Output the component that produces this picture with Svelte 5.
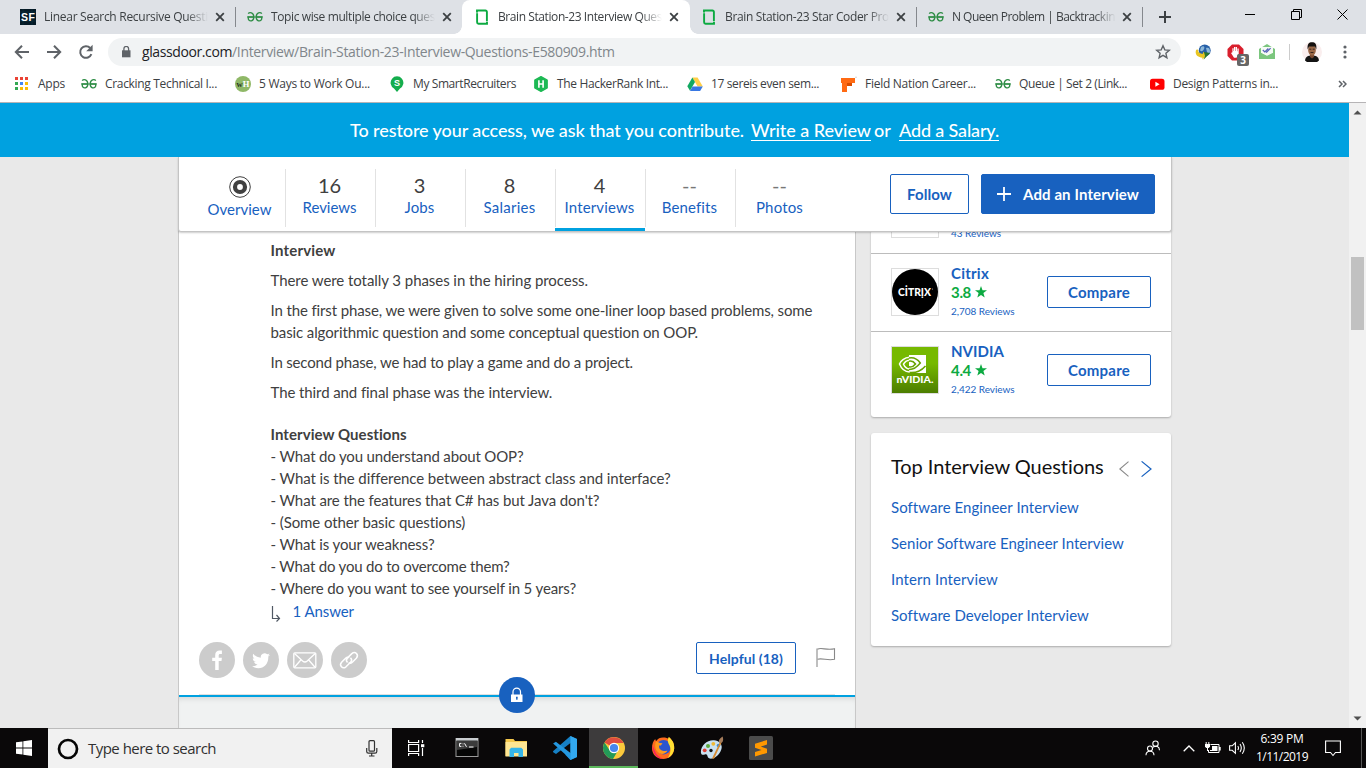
<script>
  // Tracks a label so that it spans the given width in pixels.
  function fit(node, width) {
    const natural = node.getBoundingClientRect().width;
    const count = [...node.textContent].length;
    if (width && count) {
      node.style.letterSpacing = (width - natural) / count + 'px';
    }
  }

  const tabs = [
    { icon: 'sf', title: 'Linear Search Recursive Questi', w: 164 },
    { icon: 'gg', title: 'Topic wise multiple choice ques', w: 164 },
    { icon: 'gd', title: 'Brain Station-23 Interview Ques', w: 164, active: true },
    { icon: 'gd', title: 'Brain Station-23 Star Coder Pro', w: 164 },
    { icon: 'gg', title: 'N Queen Problem | Backtrackin', w: 163 }
  ];

  const bookmarks = [
    { icon: 'gg', title: 'Cracking Technical I...', w: 112, span: 154 },
    { icon: 'wh', title: '5 Ways to Work Ou...', w: 111, span: 154 },
    { icon: 'sr', title: 'My SmartRecruiters', w: 103, span: 144 },
    { icon: 'hr', title: 'The HackerRank Int...', w: 111, span: 154 },
    { icon: 'drive', title: '17 sereis even sem...', w: 108, span: 154 },
    { icon: 'fn', title: 'Field Nation Career...', w: 111, span: 154 },
    { icon: 'gg', title: 'Queue | Set 2 (Link...', w: 108, span: 154 },
    { icon: 'yt', title: 'Design Patterns in...', w: 105, span: 154 }
  ];

  const nav = [
    { count: '', label: 'Overview', w: 64 },
    { count: '16', label: 'Reviews', w: 54 },
    { count: '3', label: 'Jobs', w: 30 },
    { count: '8', label: 'Salaries', w: 52 },
    { count: '4', label: 'Interviews', w: 70, active: true },
    { count: '--', label: 'Benefits', w: 55 },
    { count: '--', label: 'Photos', w: 47 }
  ];

  const questions = [
    ['- What do you understand about OOP?', 253],
    ['- What is the difference between abstract class and interface?', 399.5],
    ["- What are the features that C# has but Java don't?", 329],
    ['- (Some other basic questions)', 195],
    ['- What is your weakness?', 164],
    ['- What do you do to overcome them?', 239],
    ['- Where do you want to see yourself in 5 years?', 305.5]
  ];

  const companies = [
    { name: 'Citrix', nw: 38, rating: '3.8', reviews: '2,708 Reviews' },
    { name: 'NVIDIA', nw: 53, rating: '4.4', reviews: '2,422 Reviews' }
  ];

  const topics = [
    ['Software Engineer Interview', 187.5],
    ['Senior Software Engineer Interview', 232.5],
    ['Intern Interview', 107],
    ['Software Developer Interview', 197.5]
  ];
  const apps = ['cmd', 'files', 'code', 'chrome', 'firefox', 'paint', 'sublime'];
  const appsDots = ['#ea4335', '#ea4335', '#ea4335', '#34a853', '#4285f4', '#fbbc05', '#34a853', '#fbbc05', '#fbbc05'];
</script>

{#snippet favicon(name)}
  <svg class="fav" viewBox="0 0 16 16" width="16" height="16">
    {#if name === 'sf'}
      <rect width="16" height="16" fill="#061a26" />
      <path d="M0 3h16M0 12h16M3 0v16M12 0v16" stroke="#0c3040" stroke-width=".7" />
      <text x="8" y="11.6" text-anchor="middle" font-size="10.5" font-weight="700" fill="#fff" font-family="Liberation Sans, sans-serif" textLength="14">SF</text>
    {:else if name === 'gg'}
      <g fill="none" stroke="#2f8d46" stroke-width="1.35">
        <path d="M1.2 4.6C2.500 3 6.800 3.300 6.800 7.900S2.400 13 1.300 9.900V8h6.200" />
        <path d="M14.800 4.600C13.500 3 9.200 3.300 9.200 7.900s4.400 5.100 5.500 2V8H8.500" />
        <path d="M0 8h16" stroke-width="1" />
      </g>
    {:else if name === 'gd'}
      <g fill="none" stroke="#0caa41" stroke-width="1.900">
        <path d="M3 4V1.500h8.500a1.400 1.400 0 0 1 1.400 1.400v9.600" />
        <path d="M13 12v2.700H4.500a1.400 1.400 0 0 1-1.400-1.400V3.700" />
      </g>
      <path d="M1.500 3.400h2.800v.8H1.500zM11.600 12h2.800v.8h-2.800z" fill="#fff" opacity=".8" />
    {:else if name === 'wh'}
      <circle cx="8" cy="8" r="8" fill="#8fb867" />
      <text x="8" y="11" text-anchor="middle" font-size="8.500" font-weight="700" font-family="Liberation Serif, serif"><tspan fill="#263322">w</tspan><tspan fill="#fff">H</tspan></text>
    {:else if name === 'sr'}
      <path d="M8 16 5 12.400a6.400 6.400 0 1 1 6 0z" fill="#14ad4d" />
      <text x="8" y="9.800" text-anchor="middle" font-size="9" font-weight="700" fill="#fff" font-family="Liberation Sans, sans-serif">S</text>
    {:else if name === 'hr'}
      <path d="M8 .6l6.200 3.400v8L8 15.400 1.800 12V4z" fill="#1db954" stroke="#1db954" stroke-width="1.300" stroke-linejoin="round" />
      <path d="M5.900 4.200v7.600M10.100 4.200v7.600M5.900 8h4.200" stroke="#fff" stroke-width="1.600" />
    {:else if name === 'drive'}
      <path d="M5.400 1.500h5.200l5.200 9h-5.200z" fill="#ffcf48" />
      <path d="M5.400 1.500l2.600 4.600-5 8.600-2.700-4.400z" fill="#11a861" />
      <path d="M5.500 10.500h10.300L13.100 15H3z" fill="#3777e3" />
    {:else if name === 'fn'}
      <path d="M0 2h14v5h-3v3H6v6H1V7H0z" fill="#ff6a13" />
      <path d="M6 7h5v3H6z" fill="#d84c00" />
      <path d="M14.500.8h1v1h-1z" fill="#aaa" />
    {:else if name === 'yt'}
      <rect x="1" y="2.800" width="14.500" height="11" rx="2.600" fill="#f00" />
      <path d="M6.400 5.800v5l4.200-2.500z" fill="#fff" />
    {/if}
  </svg>
{/snippet}

{#snippet taskIcon(name)}
  <svg viewBox="0 0 24 24" width="24" height="24">
    {#if name === 'cmd'}
      <rect x="1" y="2.500" width="22" height="18" fill="#050505" stroke="#9a9a9a" />
      <path d="M1 2h22v2.600H1z" fill="#c9cdd0" />
      <path d="M2 5h20v6L2 14z" fill="#3b3b3b" />
      <path d="M6.400 7.400H4.600v3h1.800M8 7.500v.8M8 9.800v.8M9.500 7.300l2 3.500M14 11h4.500" stroke="#fff" fill="none" />
    {:else if name === 'files'}
      <path d="M1.500 3h8l1.500 2h12v15h-21.500z" fill="#f5c84c" />
      <path d="M1.500 6h21.500v14.500H1.500z" fill="#ffe692" />
      <path d="M5.500 21v-7.500l1.700-1.700h10.100l1.700 1.700V21h-4.500v-4h-4.500v4z" fill="#35b5e9" />
    {:else if name === 'code'}
      <path d="M17.400 0 24 3v18l-6.600 3L12 18.500 17.500 17V7L3 18.100.2 16.300 0 15.200z" fill="#1680c5" />
      <path d="M.1 7.500 2.900 5.800 17.500 17v7L13 19z" fill="#2497df" />
      <path d="M17.400 0 24 3v18l-6.600 3z" fill="#32a8ef" />
    {:else if name === 'chrome'}
      <circle cx="12" cy="12" r="11" fill="#fbc93c" />
      <path d="M12 12 2.500 6.500A11 11 0 0 1 21.600 7H12z" fill="#df4d3f" />
      <path d="M2.500 6.500A11 11 0 0 0 11 23l5-8.500-4-2.500-4.500 2z" fill="#239a58" />
      <circle cx="12" cy="12" r="5.200" fill="#fff" />
      <circle cx="12" cy="12" r="4.100" fill="#4687ed" />
    {:else if name === 'firefox'}
      <path d="M12 1.500c3 0 4.500.6 6.200 1.600l-.4-2C22 4.600 23.400 8 23.200 12.500 22.800 19 18 23 12.200 23 6 23 1 18.400 1 12.200 1 8 2.200 5 4.200 3L5 5.200C7 2.600 9 1.500 12 1.500z" fill="#ff6a1d" />
      <path d="M1.400 9C1 17 6 23 12.200 23c-4.200-2-7-4-8.300-8z" fill="#f7215e" />
      <circle cx="12.600" cy="11.200" r="7.200" fill="#2b55d0" />
      <path d="M5.200 5.300 9 7l2.500.2-1.600 2.400H8.100c-.4 2.300.5 4 2.700 5 2.400.9 3.800-.2 5.700.1-1.600 3-6.100 4.600-9.300 1.800C3.800 13.700 3.500 8.500 5.200 5.300z" fill="#ff9a1d" />
      <path d="M17.800 1.100C22 4.600 23.400 8 23.200 12.500 22.800 17 20 20.600 16.800 22c3-4.500 3.700-10 .9-14C16.500 5.500 16.600 3 17.800 1.100z" fill="#ffdf33" />
    {:else if name === 'paint'}
      <path d="M1 17C0 10 7 3.500 14 4.200c7 .6 9.400 6 6.600 11C17 22.500 9.500 24.500 7.800 21c-.8-2-.6-3-3-2.500-1.800.5-3.500.5-3.800-1.500z" fill="#c9e1f1" />
      <circle cx="4.700" cy="14.300" r="1.900" fill="#dd3f35" /><circle cx="8" cy="10" r="2" fill="#5caa3c" />
      <circle cx="13.300" cy="7.800" r="1.900" fill="#f1b832" /><circle cx="18.500" cy="9.500" r="1.800" fill="#3c8fd6" />
      <circle cx="11" cy="14.500" r="1.700" fill="#111" />
      <path d="M12 22.500 20 6l1.500.7-7.500 16z" fill="#d88b31" />
      <path d="M19 6c-.6-2.500 1.500-4 3.600-5.500.8 2.400 1 5-1.200 6.600z" fill="#a67d5c" />
    {:else}
      <rect width="24" height="24" rx="1.500" fill="#4b4b4b" />
      <path d="M18 4v4.600l-6.200 2L18 12.700v4.200L6 20.500V16l6.500-2L6 11.800V7.700z" fill="#ff9800" />
    {/if}
  </svg>
{/snippet}

<div class="screen">
  <header class="tabstrip">
    {#each tabs as tab, i}
      <div class="tab" class:active={tab.active} class:divided={i === 1 || i === 4}>
        {@render favicon(tab.icon)}
        <div class="title"><span use:fit={tab.w}>{tab.title}</span></div>
        <svg class="close" width="10" height="10" viewBox="0 0 10 10"><path d="M1.200 1.200l7.600 7.600M8.800 1.200 1.200 8.800" stroke="#3c4043" stroke-width="1.800" /></svg>
      </div>
    {/each}
    <div class="newtab"><svg width="12" height="12" viewBox="0 0 12 12"><path d="M6 0v12M0 6h12" stroke="#3c4043" stroke-width="2" /></svg></div>
    <div class="wincontrols">
      <svg width="11" height="11" viewBox="0 0 11 11"><path d="M0 5.500h10" stroke="#000" /></svg>
      <svg width="11" height="11" viewBox="0 0 11 11"><path d="M.5 2.500h8v8h-8zM2.500 2.500v-2h8v8h-2" fill="none" stroke="#000" /></svg>
      <svg width="11" height="11" viewBox="0 0 11 11"><path d="M.5.5l10 10M10.500.5l-10 10" stroke="#000" /></svg>
    </div>
  </header>

  <div class="toolbar">
    <div class="navicons">
      <svg width="16" height="16" viewBox="0 0 16 16"><path d="M15 8H2M8 1.700 1.800 8 8 14.300" fill="none" stroke="#5f6368" stroke-width="2" /></svg>
      <svg width="16" height="16" viewBox="0 0 16 16"><path d="M1 8h13M8 1.700 14.200 8 8 14.300" fill="none" stroke="#5f6368" stroke-width="2" /></svg>
      <svg width="16" height="16" viewBox="0 0 16 16"><path d="M13.400 10.200A5.800 5.800 0 1 1 12.200 4" fill="none" stroke="#5f6368" stroke-width="2" /><path d="M14.600.8v6.400H8.200z" fill="#5f6368" /></svg>
    </div>
    <div class="omnibox">
      <svg class="padlock" width="10" height="12" viewBox="0 0 10 12"><path d="M0 4.300h8.500v7H0z" fill="#5f6368" /><path d="M1.900 5V2.800a2.350 2.350 0 0 1 4.700 0V5" fill="none" stroke="#5f6368" stroke-width="1.300" /></svg>
      <div class="url"><b use:fit={90}>glassdoor.com</b><span use:fit={382.5}>/Interview/Brain-Station-23-Interview-Questions-E580909.htm</span></div>
      <svg class="star" width="16" height="16" viewBox="0 0 16 16"><path d="M8 1.800l1.800 4.100 4.500.4-3.400 3 1 4.400L8 11.400l-3.900 2.300 1-4.400-3.400-3 4.500-.4z" fill="none" stroke="#5f6368" stroke-width="1.400" /></svg>
    </div>
    <div class="extensions">
      <svg width="16" height="16" viewBox="0 0 16 16">
        <circle cx="9.700" cy="6.400" r="6" fill="#2860a8" /><path d="M6 3c3-2 4 0 3 2S7 8 5 6.500zM11 4c2-1 4 0 4 3s-2 3-3 1z" fill="#8db8d8" />
        <path d="M1.200 5.800C-.5 10 2 13.400 7.500 13.700l-.2 1.800 4.700-4-3.800-3.700-.2 2C5.200 9.800 3 8.700 3 5.500z" fill="#e8c522" /><path d="M9 8l6 1-6.400 6.800L10 12z" fill="#29752b" />
      </svg>
      <div class="blocker">
        <svg width="17" height="17" viewBox="0 0 17 17"><path d="M5 .5h7L16.500 5v7L12 16.500H5L.5 12V5z" fill="#d91f2d" /><path d="M4 9l1.400-.8V4.300h1.200V7h.4V3h1.300v4h.4V3h1.300v4.200h.4V4.400h1.300V10l-2.200 3.700H7z" fill="#fff" /></svg>
        <span class="count">3</span>
      </div>
      <svg width="16" height="16" viewBox="0 0 16 16"><path d="M0 5 8 0l8 5v10H0z" fill="#7bc67e" /><path d="M2 3h12v6l-6 3-6-3z" fill="#f5faf5" /><path d="M3.800 6l2 2 3.500-3.500M7 7.800l.6.400 4-4" fill="none" stroke="#5562b8" stroke-width="1.200" /><path d="M0 8l8 4 8-4v7H0z" fill="#7bc67e" /></svg>
      <i class="bar"></i>
      <svg width="20" height="20" viewBox="0 0 20 20"><circle cx="10" cy="10" r="10" fill="#faeeee" /><path d="M3 18.500c.5-4 3-5 7-5s6.500 1 7 5a10 10 0 0 1-14 0z" fill="#141414" /><path d="M8 12h4v3l-2 1.500-2-1.500z" fill="#7a4930" /><ellipse cx="10" cy="8" rx="3.900" ry="5.500" fill="#9a6847" /><path d="M5.700 7.500C5 2 7 .3 10 .3S15 2 14.300 7.500L13 4.600H7z" fill="#15110f" /><path d="M7.300 7.200h2M10.700 7.200h2M8.500 10.500h3" stroke="#3a241c" /></svg>
      <svg width="4" height="14" viewBox="0 0 4 14"><g fill="#5f6368"><circle cx="2" cy="2" r="1.600" /><circle cx="2" cy="7" r="1.600" /><circle cx="2" cy="12" r="1.600" /></g></svg>
    </div>
  </div>

  <div class="bookmarks">
    <div class="appsitem">
      <svg width="13" height="13" viewBox="0 0 13 13">
        {#each appsDots as c, i}<rect x={(i % 3) * 5} y={Math.floor(i / 3) * 5} width="3" height="3" fill={c} />{/each}
      </svg>
      <span use:fit={27}>Apps</span>
    </div>
    {#each bookmarks as mark}
      <div class="mark" style:width="{mark.span}px">{@render favicon(mark.icon)}<span use:fit={mark.w}>{mark.title}</span></div>
    {/each}
    <svg class="more" width="9" height="8" viewBox="0 0 9 8"><path d="M1 1l3 3-3 3M5 1l3 3-3 3" fill="none" stroke="#5f6368" stroke-width="1.500" /></svg>
  </div>

  <div class="viewport">
    <div class="page">
      <div class="banner">
        <span use:fit={394}>To restore your access, we ask that you contribute.</span>
        <a use:fit={120}>Write a Review</a>
        <span class="or" use:fit={17}>or</span>
        <a class="salary" use:fit={100}>Add a Salary.</a>
      </div>

      <div class="wrap">
        <nav>
          <div class="navtabs">
            {#each nav as item}
              <div class="navitem" class:active={item.active}>
                {#if item.count}
                  <span class="num" class:empty={item.count === '--'}>{item.count}</span>
                {:else}
                  <svg width="22" height="22" viewBox="0 0 22 22"><circle cx="11" cy="11" r="10.300" fill="none" stroke="#404040" /><circle cx="11" cy="11" r="5" fill="none" stroke="#404040" stroke-width="4.200" /></svg>
                {/if}
                <span class="lbl" use:fit={item.w}>{item.label}</span>
              </div>
            {/each}
          </div>
          <div class="actions">
            <button class="follow"><span use:fit={45}>Follow</span></button>
            <button class="add"><svg width="14" height="14" viewBox="0 0 14 14"><path d="M7 0v14M0 7h14" stroke="#fff" stroke-width="1.800" /></svg><span use:fit={116}>Add an Interview</span></button>
          </div>
        </nav>

        <div class="columns">
          <main>
            <div class="review">
              <h3><span use:fit={65}>Interview</span></h3>
              <p><span use:fit={317.5}>There were totally 3 phases in the hiring process.</span></p>
              <p><span use:fit={541.5}>In the first phase, we were given to solve some one-liner loop based problems, some</span><br /><span use:fit={428}>basic algorithmic question and some conceptual question on OOP.</span></p>
              <p><span use:fit={362.5}>In second phase, we had to play a game and do a project.</span></p>
              <p><span use:fit={281.5}>The third and final phase was the interview.</span></p>
              <h3 class="qhead"><span use:fit={136.5}>Interview Questions</span></h3>
              {#each questions as [q, w]}
                <div class="q"><span use:fit={w}>{q}</span></div>
              {/each}
              <div class="answer">
                <svg width="11" height="16" viewBox="0 0 11 16"><path d="M1.500 0v12.500H8M5.500 9l3 3.500-3 3" fill="none" stroke="#505863" stroke-width="1.200" /></svg>
                <a use:fit={61.5}>1 Answer</a>
              </div>
            </div>
            <div class="share">
              <span class="round"><svg width="36" height="36" viewBox="0 0 36 36"><path d="M16.200 28V19h-3v-3.200h3v-2.600c0-3 1.700-4.600 4.500-4.600h2.200v3.300h-1.600c-1.300 0-1.600.6-1.600 1.700v2.200h3.200l-.4 3.200h-2.800v9z" fill="#fff" /></svg></span>
              <span class="round"><svg width="36" height="36" viewBox="0 0 36 36"><path d="M27 12.800c-.7.300-1.300.500-2 .600.700-.5 1.200-1.200 1.500-2-.8.500-1.500.700-2.300.900a3.800 3.800 0 0 0-6.400 3.400c-3-.2-5.700-1.600-7.500-4-.9 1.700-.5 3.800 1.200 5-.6 0-1.200-.2-1.700-.5 0 1.800 1.200 3.300 3 3.700-.5.200-1.100.2-1.700.1.500 1.500 1.800 2.500 3.500 2.600a8 8 0 0 1-5.600 1.700c8.600 5 16.800-.7 16.300-9.700.7-.5 1.300-1.100 1.700-1.800z" fill="#fff" /></svg></span>
              <span class="round"><svg width="36" height="36" viewBox="0 0 36 36"><g fill="none" stroke="#fff" stroke-width="1.300"><rect x="6.800" y="10.800" width="22" height="15" rx="1" /><path d="M7.500 11.500 15.600 19q2.300 2 4.600 0l8-7.500M7.500 25.200l6.500-7.500M28 25.200l-6.500-7.500" /></g></svg></span>
              <span class="round"><svg width="36" height="36" viewBox="0 0 36 36"><g fill="none" stroke="#fff" stroke-width="1.500"><path d="M16.500 20.500c-1.500-1.500-1.300-3.300 0-4.600l4.300-4.300c3.600-3 7.400 1.300 4.500 4.600l-4 4c-1.300 1.200-2.500 1.300-3.700.5" /><path d="M19.500 15.700c1.500 1.500 1.400 3.200.1 4.500l-4.600 4.600c-3.500 2.800-7.200-1.300-4.400-4.500l4-4c1.100-1.100 2.400-1.300 3.600-.6" /></g></svg></span>
              <button class="helpful"><span use:fit={74}>Helpful (18)</span></button>
              <svg class="flag" width="20" height="21" viewBox="0 0 20 21"><path d="M1 20V1.500" stroke="#aaa" stroke-width="1.500" /><path d="M1.500 2.200c4-2.200 9 1.500 17-.4v10.500c-7 1.700-11.500-1.500-17-.1" fill="none" stroke="#888" stroke-width="1.100" /></svg>
            </div>
            <div class="rule"></div>
            <div class="locked"><span class="lock"><svg width="12" height="16" viewBox="0 0 12 16"><path d="M2 8V4.800a3.700 3.700 0 0 1 7.500 0V8" fill="none" stroke="#fff" stroke-width="1.200" /><path d="M0 7.500h11.500V15H0z" fill="#fff" /><path d="M5 9.700h1.700v2H6.400v1.400h-1v-1.400H5z" fill="#1861bf" /></svg></span></div>
          </main>

          <aside>
            <section class="compare">
              <div class="row first"><div class="logo"></div><span class="reviews" use:fit={50}>43 Reviews</span></div>
              {#each companies as c, i}
                <div class="row">
                  <div class="logo">
                    {#if i === 0}
                      <svg width="46" height="46" viewBox="0 0 46 46"><circle cx="23" cy="23" r="23" /><text x="6" y="27.300" font-size="11" font-weight="900" fill="#fff" font-family="Lato, sans-serif" textLength="33" lengthAdjust="spacingAndGlyphs">CİTRỊX</text><circle cx="40.500" cy="20" r=".6" fill="#aaa" /></svg>
                    {:else}
                      <svg width="46" height="46" viewBox="0 0 46 46">
                        <defs><linearGradient id="nv" x1="0" y1="0" x2="0" y2="1"><stop offset=".35" stop-color="#76b900" /><stop offset="1" stop-color="#4c7d00" /></linearGradient></defs>
                        <rect width="46" height="46" fill="url(#nv)" />
                        <path d="M17 8h17v18H17z" fill="#fff" />
                        <g fill="none" stroke="#fff" stroke-width="1.500"><path d="M17.500 10.300C12.500 10.500 8.500 14 7.500 17c2 5 6 7.800 10 8" /><path d="M17.500 13.200c-3 .3-5 2-6 4 1.300 2.800 3.500 4.500 6 4.800" /></g>
                        <g fill="none" stroke="#68a300" stroke-width="1.500"><path d="M17 11c6-1.200 9.500 2.500 11.300 5-2.800 3.500-6 6.700-11.300 6.500" /><path d="M17 14.200c3-.8 5.200 1 6.500 2.800-1.800 2.300-3.500 3.500-6.500 2.800" /><path d="M33.500 19c-3.500 4-8 7.300-16 6.500" /></g>
                        <text x="4.500" y="35.800" font-size="9.500" font-weight="900" fill="#fff" font-family="Lato, sans-serif" textLength="37" lengthAdjust="spacingAndGlyphs">nVIDIA.</text>
                      </svg>
                    {/if}
                  </div>
                  <div class="info">
                    <strong><span use:fit={c.nw}>{c.name}</span></strong>
                    <em><span use:fit={20}>{c.rating}</span><svg width="12" height="12" viewBox="0 0 12 12"><path d="M6 0l1.500 4.200H12L8.400 7l1.300 4.500L6 8.900l-3.700 2.600L3.600 7 0 4.200h4.500z" fill="#0caa41" /></svg></em>
                    <span class="reviews" use:fit={63.5}>{c.reviews}</span>
                  </div>
                  <button><span use:fit={62}>Compare</span></button>
                </div>
              {/each}
            </section>
            <section class="top">
              <div class="tophead">
                <h2><span use:fit={213}>Top Interview Questions</span></h2>
                <svg width="10" height="16" viewBox="0 0 10 16"><path d="M9.500.6.8 8l8.700 7.400" fill="none" stroke="#888" stroke-width="1.100" /></svg>
                <svg width="11" height="16" viewBox="0 0 11 16"><path d="M.6.4 10 8 .6 15.600" fill="none" stroke="#1861bf" stroke-width="1.200" /></svg>
              </div>
              {#each topics as [t, w]}<div class="topic"><a use:fit={w}>{t}</a></div>{/each}
            </section>
          </aside>
        </div>
      </div>
    </div>
    <div class="scrollbar">
      <svg width="9" height="5" viewBox="0 0 9 5"><path d="M.5 4.500h8L4.500.5z" fill="#505050" /></svg>
      <div class="track"><div class="thumb"></div></div>
      <svg width="9" height="5" viewBox="0 0 9 5"><path d="M.5.5h8l-4 4z" fill="#505050" /></svg>
    </div>
  </div>

  <footer>
    <div class="start"><svg width="16" height="16" viewBox="0 0 16 16" fill="#fff"><path d="M0 2.300 6.500 1.400v6.200H0zM7.300 1.300 16 0v7.600H7.300zM0 8.400h6.500v6.200L0 13.700zM7.300 8.400H16V16l-8.700-1.300z" /></svg></div>
    <div class="search">
      <svg width="22" height="22" viewBox="0 0 22 22"><circle cx="11" cy="11" r="9" fill="none" stroke="#050505" stroke-width="2.700" /></svg>
      <span use:fit={128}>Type here to search</span>
      <svg class="mic" width="12" height="17" viewBox="0 0 12 17"><g fill="none" stroke="#333" stroke-width="1.200"><rect x="3" y=".7" width="5.500" height="10.500" rx="1" /><path d="M.7 8v3.500c0 1 .7 1.700 1.700 1.700h6.700c1 0 1.700-.7 1.700-1.700V8M5.700 13.500V16M3 16h5.500" /></g></svg>
    </div>
    <div class="taskview"><svg width="17" height="16" viewBox="0 0 17 16"><path d="M.6 0v2.500h10V0M.6 16v-2.500h10V16M.6 4.500h10v7H.6zM14.500 0v3M14.500 8v8" fill="none" stroke="#fff" stroke-width="1.200" /><path d="M13 4.200h3.300v3H13z" fill="#fff" /></svg></div>
    {#each apps as app}<div class="task" class:current={app === 'chrome'}>{@render taskIcon(app)}</div>{/each}
    <div class="tray">
      <svg class="people" width="16" height="16" viewBox="0 0 16 16"><g fill="none" stroke="#fff" stroke-width="1.100"><circle cx="10.500" cy="3.700" r="2.700" /><circle cx="5" cy="8.500" r="2.500" /><path d="M1 15.200c0-5.200 7.800-5.500 8 0M8 7.200c3-2 6.500-.7 6.500 3" /></g></svg>
      <svg class="up" width="12" height="7" viewBox="0 0 12 7"><path d="M.7 6.300 6 1l5.300 5.300" fill="none" stroke="#fff" stroke-width="1.300" /></svg>
      <svg class="battery" width="16" height="12" viewBox="0 0 16 12"><path d="M5.500 2.500h8.500v8H3.500V8M14.500 5v3.500M15.200 5v3.500" fill="none" stroke="#fff" /><path d="M7 4h5.500v5H5V8h2z" fill="#fff" /><path d="M1.200 0v2M3.800 0v2" stroke="#fff" /><path d="M0 2h5v2.500L3.800 6H1.200L0 4.500z" fill="#fff" /><path d="M2.500 6v3" stroke="#fff" /></svg>
      <svg class="speaker" width="17" height="14" viewBox="0 0 17 14"><path d="M.6 4.800h2.600l3.200-3v10.500L3.200 9.300H.6zM8.800 5q1.400 2 0 4M11 3q2.600 4 0 8M13.300 1.300q4 5.700 0 11.400" fill="none" stroke="#fff" stroke-width="1.100" /></svg>
      <div class="clock"><span use:fit={43}>6:39 PM</span><span use:fit={52}>1/11/2019</span></div>
      <svg class="notice" width="16" height="17" viewBox="0 0 16 17"><path d="M.6 1h14.800v11.500H10.500L8 15.500l-2.500-3H.6z" fill="none" stroke="#fff" stroke-width="1.100" /></svg>
      <i></i>
    </div>
  </footer>
</div>

<style>
  :global(body) { margin: 0; overflow: hidden; }
  * { box-sizing: border-box; }
  svg { display: block; flex: none; }
  .screen { width: 1366px; height: 768px; display: flex; flex-direction: column; overflow: hidden; font-family: "Open Sans", "Noto Sans", sans-serif; font-size: 12px; color: #3c4043; background: #fff; }
  span, a, b { white-space: nowrap; }
  span, b { display: inline-block; }

  .tabstrip { height: 34px; flex: none; background: #dee1e6; display: flex; padding-left: 8px; }
  .tab { position: relative; width: 227px; display: flex; align-items: center; padding-left: 12px; }
  .tab .title { width: 164px; margin-left: 8px; line-height: 18px; -webkit-mask-image: linear-gradient(90deg, #000 142px, transparent 164px); mask-image: linear-gradient(90deg, #000 142px, transparent 164px); }
  .close { margin-left: 7px; }
  .tab:nth-child(5) .close { margin-left: 6px; }
  .tab.divided::before { content: ""; position: absolute; left: 0; top: 7px; width: 1px; height: 20px; background: #85888d; }
  .tab.active { background: #fff; border-radius: 8px 8px 0 0; width: 228px; margin-right: -1px; }
  .tab.active::before, .tab.active::after { content: ""; position: absolute; bottom: 0; width: 8px; height: 8px; background: radial-gradient(circle at 0 0, transparent 7.500px, #fff 8px); }
  .tab.active::before { left: -8px; }
  .tab.active::after { right: -8px; background: radial-gradient(circle at 100% 0, transparent 7.500px, #fff 8px); }
  .newtab { width: 60px; border-left: 1px solid #85888d; margin: 7px 0 0 -1px; height: 20px; padding: 4px 0 0 16px; }
  .wincontrols { margin-left: auto; display: flex; gap: 35px; padding: 9px 18px 0 0; }

  .toolbar { height: 36px; flex: none; display: flex; align-items: center; }
  .navicons { width: 108px; display: flex; gap: 16px; padding-left: 14px; }
  .omnibox { width: 1073px; height: 28px; border-radius: 14px; background: #f1f3f4; display: flex; align-items: center; padding: 0 10px 0 14px; font-size: 14px; color: #80868b; }
  .url { margin-left: 10px; line-height: 20px; }
  .url b { font-weight: 400; color: #202124; }
  .star { margin-left: auto; }
  .extensions { display: flex; align-items: center; padding-left: 14px; }
  .blocker { position: relative; margin: 0 15px 0 16px; }
  .count { position: absolute; left: 10px; top: 10px; width: 12px; height: 12px; border-radius: 2px; background: #666; color: #fff; font-size: 10px; line-height: 12px; font-weight: 700; text-align: center; }
  .bar { width: 1px; height: 16px; background: #ccc; margin: 0 12px 0 14px; }
  .extensions svg:last-child { margin-left: 21px; }

  .bookmarks { height: 33px; flex: none; display: flex; align-items: center; padding: 0 0 5px 15px; border-bottom: 1px solid #b6b4b6; }
  .appsitem { width: 66px; display: flex; align-items: center; gap: 10px; }
  .mark { display: flex; align-items: center; gap: 8px; flex: none; }
  .more { margin-left: 35px; }

  .viewport { flex: 1; min-height: 0; display: flex; overflow: hidden; }
  .page { width: 1349px; background: #e9e9e9; overflow: hidden; font-family: Lato, sans-serif; font-size: 15px; line-height: 22px; color: #404040; }
  .page a { color: #1861bf; }
  .banner { height: 54px; background: #00a1e0; display: flex; align-items: center; padding: 0 0 0 350px; font-size: 18px; font-weight: 500; color: #fff; }
  .banner span, .banner a { line-height: 20px; border-bottom: 1px solid transparent; }
  .page .banner a { color: #fff; border-bottom-color: #fff; margin-left: 7px; }
  .page .banner .salary { margin-left: 8px; }
  .banner .or { margin-left: 3px; }
  .wrap { width: 994px; margin-left: 178px; }
  nav { position: relative; z-index: 2; height: 75px; background: #fff; border: 1px solid #c4c4c4; border-top: 0; border-radius: 0 0 3px 3px; display: flex; padding-left: 15px; box-shadow: 0 1px 2px #0003; }
  .navtabs { display: flex; }
  .navitem { position: relative; width: 90px; display: flex; flex-direction: column; align-items: center; padding: 17px 0 0 1px; }
  .navitem + .navitem::before { content: ""; position: absolute; left: 1px; top: 12px; height: 58px; width: 1px; background: #e2e2e2; }
  .navitem.active::after { content: ""; position: absolute; left: 1px; right: -1px; bottom: 0; height: 3px; background: #00a1e0; }
  .num { font-size: 20px; height: 22px; }
  .num.empty { color: #777; }
  .lbl { color: #1861bf; }
  .navitem svg { margin: 2px 0 0; }
  .actions { margin-left: auto; display: flex; gap: 12px; padding: 17px 16px 0 0; }
  button { font: 700 15px/22px Lato, sans-serif; color: #1861bf; background: #fff; border: 1px solid #1861bf; border-radius: 2px; padding: 0; display: flex; align-items: center; justify-content: center; }
  .follow { width: 79px; height: 40px; }
  .add { width: 174px; height: 40px; background: #1861bf; color: #fff; gap: 12px; }

  .columns { display: flex; align-items: flex-start; gap: 15px; margin-top: -2px; }
  main { width: 678px; height: 500px; background: #fff; border: solid #c8c8c8; border-width: 0 1px; display: flex; flex-direction: column; }
  .review { height: 412px; padding: 9px 0 0 91.500px; }
  h3, p { margin: 0 0 8px; font-size: 15px; line-height: 22px; }
  .review span { vertical-align: top; }
  .qhead { margin: 20px 0 0; }
  .q { height: 22px; }
  .answer { display: flex; padding-top: 1px; gap: 11px; }
  .answer svg { margin-top: 6px; }
  .share { display: flex; gap: 8px; padding: 0 20px; height: 52px; }
  .round { width: 36px; height: 36px; border-radius: 50%; background: #ccc; }
  .helpful { width: 100px; height: 32px; margin-left: auto; font-size: 14px; padding-top: 1px; }
  .flag { margin: 5px -1px 0 12px; }
  .rule { height: 1px; margin: 0 20px; background: #e0e0e0; }
  .locked { height: 35px; border-top: 2px solid #00a1e0; background: #f0f2f2; display: flex; justify-content: center; box-shadow: inset 0 5px 6px -4px #0002; }
  .lock { width: 36px; height: 36px; border-radius: 50%; background: #1861bf; margin-top: -20px; flex: none; display: flex; align-items: center; justify-content: center; }

  aside { width: 300px; }
  section { background: #fff; border-radius: 3px; box-shadow: 0 1px 2px #0004; }
  .compare { height: 187px; }
  .row { height: 78px; display: flex; padding: 14px 20px 0; border-top: 1px solid #bcbcbc; }
  .row.first { height: 23px; border: 0; align-items: flex-end; padding-top: 0; }
  .logo { width: 48px; height: 48px; border: 1px solid #ddd; background: #fff; flex: none; }
  .first .logo { margin-bottom: 15px; }
  .first .reviews { margin: 0 0 13px 12px; align-self: flex-end; }
  .info { width: 96px; margin: -6px 0 0 12px; display: flex; flex-direction: column; flex: none; }
  .info strong { font-size: 15px; line-height: 22px; color: #1861bf; height: 20px; }
  .info em { font-style: normal; font-weight: 700; color: #0caa41; display: flex; align-items: center; gap: 4px; height: 19px; }
  .reviews { color: #1861bf; font-size: 10px; line-height: 14px; align-self: flex-start; }
  .info .reviews { margin-top: 3px; }
  .row button { width: 104px; height: 32px; margin-top: 8px; flex: none; }
  .top { height: 213px; margin-top: 16px; padding: 16px 0 0 20px; }
  .tophead { display: flex; align-items: center; height: 39px; }
  .tophead svg { margin-left: 12px; }
  .tophead h2 + svg { margin-left: 15px; }
  h2 { margin: 0 0 5px; font-weight: 400; font-size: 20px; line-height: 24px; color: #111; }
  .topic { height: 36px; padding-top: 8px; }
  .topic a, .answer a { display: inline-block; }

  .scrollbar { width: 17px; background: #f1f1f1; display: flex; flex-direction: column; align-items: center; padding: 7px 0; }
  .track { flex: 1; width: 13px; padding-top: 142px; }
  .thumb { height: 73px; background: #c1c1c1; }

  footer { height: 40px; flex: none; background: #0a0809; display: flex; color: #fff; }
  .start { width: 48px; display: flex; align-items: center; justify-content: center; }
  .search { width: 344px; background: #f1f1f1; border-top: 1px solid #bbb; display: flex; align-items: center; padding: 0 14px 0 9px; font-size: 15px; color: #303030; }
  .search span { margin: -2px 0 0 9px; }
  .mic { margin-left: auto; }
  .taskview { width: 50px; display: flex; align-items: center; padding-left: 16px; }
  .task { width: 49px; display: flex; align-items: center; justify-content: center; }
  .task.current { background: #3d3b3c; border-bottom: 2px solid #5cb85c; padding-top: 2px; }
  .tray { margin-left: auto; display: flex; align-items: center; }
  .up { margin-left: 22px; }
  .battery { margin-left: 10px; }
  .speaker { margin-left: 8px; }
  .clock { width: 60px; margin-left: 6px; display: flex; flex-direction: column; align-items: center; line-height: 18px; }
  .notice { margin-left: 13px; }
  .tray i { width: 1px; height: 40px; background: #555; margin: 0 4px 0 20px; }
</style>
